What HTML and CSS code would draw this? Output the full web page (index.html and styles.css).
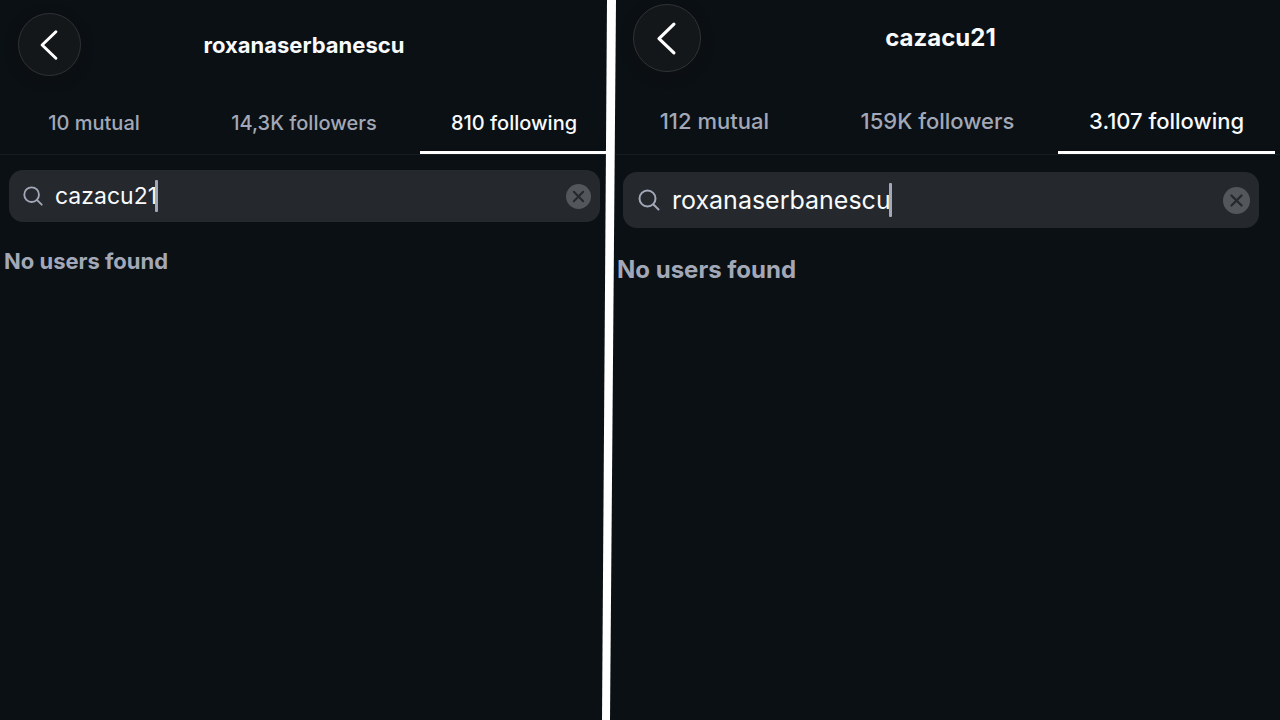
FILE: index.html
```html
<!DOCTYPE html>
<html lang="en">
<head>
<meta charset="utf-8">
<meta name="viewport" content="width=device-width, initial-scale=1">
<title>Following lists</title>
<link rel="stylesheet" href="styles.css">
</head>
<body>
<main class="compare">
  <section class="panel panel-left">
    <header class="topbar">
      <button class="back" type="button" aria-label="Back">
        <svg viewBox="0 0 62 62" aria-hidden="true"><path d="M37.500 18 23.500 31.500 37.500 45"/></svg>
      </button>
      <h1 class="title">roxanaserbanescu</h1>
    </header>
    <nav class="tabs">
      <button class="tab" type="button">10 mutual</button>
      <button class="tab" type="button">14,3K followers</button>
      <button class="tab tab-active" type="button" aria-current="true">810 following</button>
    </nav>
    <div class="search">
      <svg class="glass" viewBox="0 0 24 24" aria-hidden="true"><circle cx="10.500" cy="10.500" r="8"/><path d="M16.500 16.500 21.500 21.500"/></svg>
      <div class="entry"><input class="query" type="text" aria-label="Search following" value="cazacu21"><span class="caret"></span></div>
      <button class="clear" type="button" aria-label="Clear search">
        <svg viewBox="0 0 24 24" aria-hidden="true"><path d="M7.500 7.500 16.500 16.500M16.500 7.500 7.500 16.500"/></svg>
      </button>
    </div>
    <p class="empty">No users found</p>
  </section>
  <section class="panel panel-right">
    <header class="topbar">
      <button class="back" type="button" aria-label="Back">
        <svg viewBox="0 0 62 62" aria-hidden="true"><path d="M37.500 18 23.500 31.500 37.500 45"/></svg>
      </button>
      <h1 class="title">cazacu21</h1>
    </header>
    <nav class="tabs">
      <button class="tab" type="button">112 mutual</button>
      <button class="tab" type="button">159K followers</button>
      <button class="tab tab-active" type="button" aria-current="true">3.107 following</button>
    </nav>
    <div class="search">
      <svg class="glass" viewBox="0 0 24 24" aria-hidden="true"><circle cx="10.500" cy="10.500" r="8"/><path d="M16.500 16.500 21.500 21.500"/></svg>
      <div class="entry"><input class="query" type="text" aria-label="Search following" value="roxanaserbanescu"><span class="caret"></span></div>
      <button class="clear" type="button" aria-label="Clear search">
        <svg viewBox="0 0 24 24" aria-hidden="true"><path d="M7.500 7.500 16.500 16.500M16.500 7.500 7.500 16.500"/></svg>
      </button>
    </div>
    <p class="empty">No users found</p>
  </section>
  <svg class="divider" viewBox="0 0 1280 720" preserveAspectRatio="none" aria-hidden="true"><path d="M607 0H616L610 720H602Z"/></svg>
</main>
</body>
</html>
```

FILE: styles.css
```css
* { box-sizing: border-box; }

body {
  margin: 0;
  background: #0b1014;
  color: #f8fafc;
  font-family: Inter, "Liberation Sans", sans-serif;
}

button, input {
  margin: 0;
  padding: 0;
  border: 0;
  background: none;
  color: inherit;
  font: inherit;
}

svg { display: block; fill: none; stroke-linecap: round; stroke-linejoin: round; }

.compare {
  position: relative;
  display: grid;
  grid-template-columns: 608fr 672fr;
  min-height: 100vh;
}

.panel { min-width: 0; }
.panel-right { padding-left: 4px; }

.divider {
  position: absolute;
  inset: 0;
  width: 100%;
  height: 100%;
  pointer-events: none;
  fill: #ffffff;
}

.topbar {
  display: grid;
  grid-template-columns: 1fr auto 1fr;
  align-items: center;
}
.panel-left .topbar { padding: 13px 18px 0; }
.panel-right .topbar { padding: 4px 32px 0 21px; }

.back {
  width: 63px;
  height: 63px;
  border: 1px solid #2f3336;
  border-radius: 50%;
  background: #13171a;
  box-shadow: 0 4px 12px #0e0f12;
}
.panel-right .back { width: 68px; height: 68px; }
.back svg { width: 100%; height: 100%; stroke: #ffffff; stroke-width: 3; }

.title { margin: 0; font-size: 22px; line-height: 28px; font-weight: 700; }
.panel-right .title { font-size: 24px; }

.tabs {
  display: grid;
  grid-template-columns: 1fr 1fr 1fr;
  border-bottom: 1px solid #181d21;
}
.panel-left .tabs { grid-template-columns: 188fr 232fr 188fr; margin-top: 16px; }
.panel-right .tabs { grid-template-columns: 205fr 242fr 217fr; margin-top: 18px; padding-right: 5px; }

.tab {
  padding: 17px 0 14px;
  border-bottom: 3px solid transparent;
  color: #a2a8b7;
  font-size: 20px;
  line-height: 28px;
  font-weight: 500;
  white-space: nowrap;
}
.panel-right .tab { padding: 17px 0 16px; font-size: 22px; }
.panel .tab-active { border-color: #ffffff; color: #f8fafc; }

.search {
  display: flex;
  align-items: center;
  height: 52px;
  margin: 15px 8px 0 9px;
  padding: 0 9px 0 13px;
  border-radius: 14px;
  background: #25292d;
}
.panel-right .search { height: 56px; margin: 17px 21px 0 11px; padding: 0 9px 0 14px; }

.glass { width: 22px; height: 22px; stroke: #a2a8b7; stroke-width: 2; }
.panel-right .glass { width: 24px; height: 24px; }

.entry { display: flex; flex: 1; align-items: center; min-width: 0; margin-left: 11px; }

.query {
  field-sizing: content;
  min-width: 0;
  outline: 0;
  font-size: 23px;
  line-height: 32px;
}
.panel-right .query { font-size: 25px; }

.caret { width: 3px; height: 32px; margin-left: -2px; border-radius: 1px; background: #a2a8b7; }
.panel-right .caret { height: 34px; }

.clear { width: 25px; height: 25px; border-radius: 50%; background: #53565a; }
.panel-right .clear { width: 27px; height: 27px; }
.clear svg { width: 100%; height: 100%; stroke: #25292d; stroke-width: 2; }

.empty {
  margin: 25px 0 0 4px;
  color: #a2a8b7;
  font-size: 22px;
  line-height: 28px;
  font-weight: 700;
}
.panel-right .empty { margin: 28px 0 0 5px; font-size: 24px; }
```
